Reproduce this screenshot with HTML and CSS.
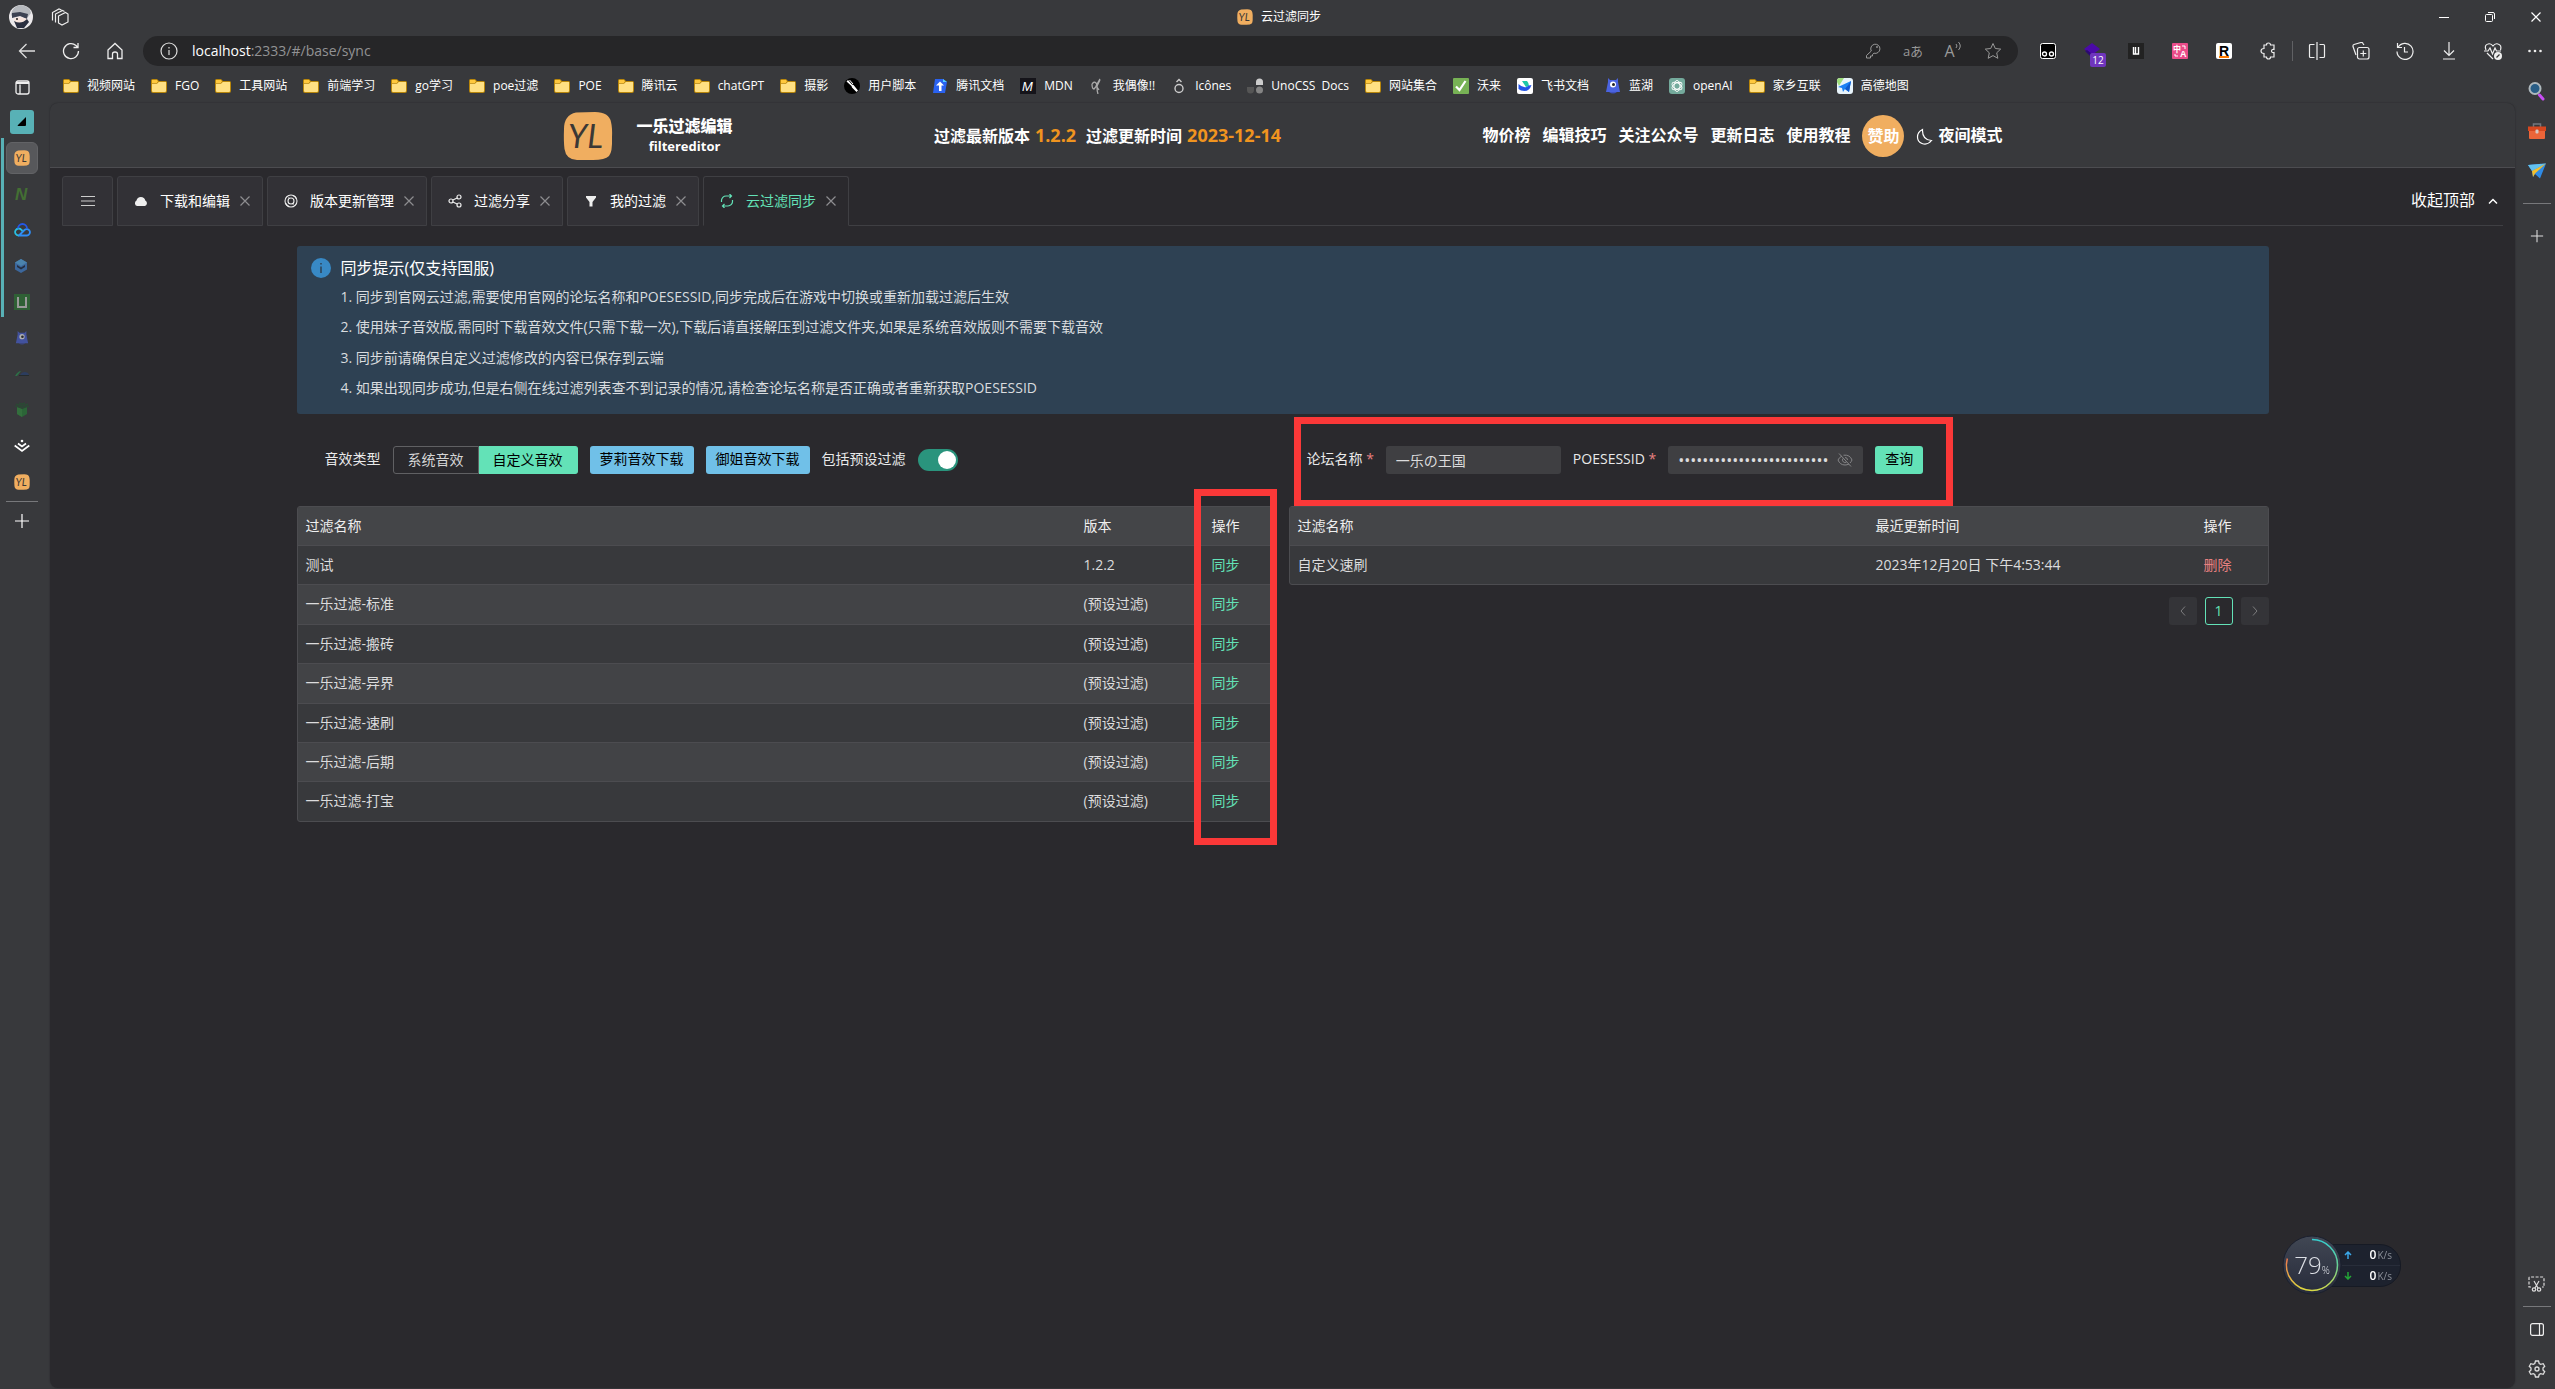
FILE: index.html
```html
<!DOCTYPE html>
<html lang="zh-CN">
<head>
<meta charset="utf-8">
<title>云过滤同步</title>
<link rel="stylesheet" href="styles.css">
</head>
<body>
<svg class="defs" aria-hidden="true">
  <symbol id="folder" viewBox="0 0 16 16"><path d="M0 2.500A1.500 1.500 0 0 1 1.500 1H6l2 2h6.500A1.500 1.500 0 0 1 16 4.500V13a2 2 0 0 1-2 2H2a2 2 0 0 1-2-2z" fill="#b8860b"/><path d="M1 2h5l1 1.300L5.800 5H1z" fill="#ffc83d"/><path d="M1 5.800h5L7.800 4H15v9a1 1 0 0 1-1 1H2a1 1 0 0 1-1-1z" fill="#ffe083"/></symbol>
  <symbol id="yl" viewBox="0 0 50 50"><path d="M13 1.500 32 1q14 0 16 10 1.500 6 1 16 .5 14-3 18-4 4-16 4H14Q3 48.500 1.500 38 .5 30 1 18 1 4 13 1.500z" fill="#f0ae60"/><text x="5" y="37" font-size="33" font-weight="400" fill="#3b3835" font-family="Lato, sans-serif" font-style="italic">YL</text></symbol>
  <symbol id="close" viewBox="0 0 12 12"><path d="M1.500 1.500l9 9M10.500 1.500l-9 9" fill="none" stroke="currentColor" stroke-width="1.200"/></symbol>
  <symbol id="plus" viewBox="0 0 16 16"><path d="M8 1v14M1 8h14" fill="none" stroke="currentColor" stroke-width="1.200"/></symbol>
  <symbol id="monster" viewBox="0 0 16 16"><path d="M3 0l2 2h6l2-2v4l1 5 1 5H1l1-5 1-5z" fill="#4a63e0"/><path d="M4 14q4 3 8 0z" fill="#3f51c0"/><circle cx="8" cy="6.500" r="3" fill="#fff"/><circle cx="8.500" cy="6.500" r="1.500" fill="#222"/></symbol>
</svg>

<header class="titlebar">
  <button class="cell" aria-label="用户"><svg width="24" height="24" viewBox="0 0 24 24"><circle cx="12" cy="12" r="12" fill="#eceaec"/><path d="M2 10Q3 1 12 0q9 1 10 8l-3 4-10-2-5 2z" fill="#b5b8bd"/><path d="M3 8l8-1 8 2-1 5-7-3-8 2z" fill="#3c4252"/><path d="M5 13l6-1 7 2-1 5-6 2-5-3z" fill="#f7e5de"/><path d="M5 16q7 4 13-2l2 3-5 6H8z" fill="#2b3040"/><circle cx="8" cy="14" r="1" fill="#222"/></svg></button>
  <button class="cell" aria-label="工作区"><svg width="18" height="18" viewBox="0 0 18 18" fill="none" stroke="#eee" stroke-width="1.200"><path d="M7.500 8l7-3.500 2.500 1.500v8l-6 3-3.500-2zM4.500 14.500V6l7-3.500 2 1M1.500 12.500v-8l6.500-3.500 2.500 1"/></svg></button>
  <div class="window-title"><svg width="16" height="16"><use href="#yl"/></svg><span>云过滤同步</span></div>
  <div class="window-controls">
    <button aria-label="最小化"><svg width="12" height="12" viewBox="0 0 12 12"><path d="M1 6.500h10" stroke="#fff"/></svg></button>
    <button aria-label="还原"><svg width="12" height="12" viewBox="0 0 12 12" fill="none" stroke="#fff"><rect x="1.500" y="3.500" width="7" height="7" rx="1"/><path d="M4 1.500h5q1.500 0 1.500 1.500v5"/></svg></button>
    <button aria-label="关闭"><svg width="12" height="12" color="#fff"><use href="#close"/></svg></button>
  </div>
</header>

<div class="toolbar">
  <button class="cell" aria-label="返回"><svg width="18" height="18" viewBox="0 0 18 18" fill="none" stroke="#ddd" stroke-width="1.300"><path d="M17 9H1.500M8.500 2l-7 7 7 7"/></svg></button>
  <button class="cell" aria-label="刷新"><svg width="18" height="18" viewBox="0 0 18 18" fill="none" stroke="#eee" stroke-width="1.300"><path d="M16.500 9A7.500 7.500 0 1 1 14 3.500L16 5.500M16 1v4.500h-4.500"/></svg></button>
  <button class="cell" aria-label="主页"><svg width="18" height="18" viewBox="0 0 18 18" fill="none" stroke="#eee" stroke-width="1.300"><path d="M2 8l7-6.500L16 8v8.500h-4.500V12q0-2-2.500-2t-2.500 2v4.500H2z"/></svg></button>
  <form class="address">
    <svg width="18" height="18" viewBox="0 0 18 18" fill="none" stroke="#ddd" stroke-width="1.200"><circle cx="9" cy="9" r="8"/><path d="M9 8v5M9 5v1.500"/></svg>
    <a class="url" href="#/base/sync">localhost<span>:2333/#/base/sync</span></a>
    <div class="address-icons">
      <button type="button" aria-label="密码"><svg width="16" height="16" viewBox="0 0 16 16" fill="none" stroke="#999"><path d="M6.300 8A4.600 4.600 0 1 1 9 10.200L7.500 11.500V13H5.500v2H1.500v-2.500z"/><circle cx="12" cy="4" r=".6"/></svg></button>
      <button type="button" class="translate" aria-label="翻译">aあ</button>
      <button type="button" class="read" aria-label="朗读">A<svg width="7" height="12" viewBox="0 0 7 12" fill="none" stroke="#999"><path d="M1 3q2 2 0 4M3.500 1q3.500 4 0 8"/></svg></button>
      <button type="button" aria-label="收藏"><svg width="18" height="18" viewBox="0 0 18 18" fill="none" stroke="#999"><path d="M9 1.500l2.300 5 5.400.6-4 3.700 1.100 5.500L9 13.600l-4.800 2.700 1.100-5.500-4-3.700 5.400-.6z"/></svg></button>
    </div>
  </form>
  <nav class="extensions" aria-label="扩展">
    <button class="cell" aria-label="脚本管理"><svg width="16" height="16" viewBox="0 0 16 16"><rect x=".5" y=".5" width="15" height="15" rx="2" fill="#000" stroke="#fff"/><g fill="none" stroke="#fff" stroke-width="1.300"><circle cx="4.500" cy="11" r="2"/><circle cx="11.500" cy="11" r="2"/></g></svg></button>
    <button class="cell badge-host" aria-label="扩展 12"><svg width="16" height="16" viewBox="0 0 16 16"><path d="M8 0l8 6-8 6-8-6z" fill="#4b0aa8"/><path d="M1 8l7 7V11L3 7z" fill="#2b0a70"/></svg><span class="badge">12</span></button>
    <button class="cell" aria-label="扩展 U"><svg width="16" height="16" viewBox="0 0 16 16"><path fill="#222" d="M0 0h16v16H0z"/><path d="M5.500 4v7h2V4M7.500 11h3V4" fill="none" stroke="#fff" stroke-width="1.400"/></svg></button>
    <button class="cell" aria-label="翻译扩展"><svg width="16" height="16" viewBox="0 0 16 16"><rect width="16" height="16" rx="1" fill="#ea4c89"/><text x="1" y="9" font-size="8" font-weight="700" fill="#fff" font-family="Noto Sans CJK SC, sans-serif">中</text><text x="8" y="14" font-size="9" font-weight="700" fill="#fff" font-family="Liberation Sans, sans-serif">A</text><path d="M10 3h3v3M3 11v2h3" fill="none" stroke="#fff"/></svg></button>
    <button class="cell" aria-label="扩展 R"><svg width="16" height="16" viewBox="0 0 16 16"><rect width="16" height="16" rx="2" fill="#fff"/><text x="3" y="13" font-size="14" font-weight="700" fill="#000" font-family="Liberation Sans, sans-serif">R</text><path d="M3 13h10v2H3z" fill="#ff7a00"/></svg></button>
    <button class="cell" aria-label="扩展管理"><svg width="18" height="18" viewBox="0 0 18 18" fill="none" stroke="#eee" stroke-width="1.200"><path d="M5 3h2.500Q7.500 1 9.500 1t2 2H15v4.500q-2.500-.3-2.500 1.500t2.500 1.500V15h-3.500q0 2-2 2t-2-2H5v-3.500Q2 11.500 2 9t3-2.500z"/></svg></button>
    <i class="sep"></i>
    <button class="cell" aria-label="拆分屏幕"><svg width="18" height="18" viewBox="0 0 18 18" fill="none" stroke="#eee" stroke-width="1.200"><path d="M9 0v18M6.500 2.500h-4q-1 0-1 1v11q0 1 1 1h4M11.500 2.500h4q1 0 1 1v11q0 1-1 1h-4"/></svg></button>
    <button class="cell" aria-label="集锦"><svg width="18" height="18" viewBox="0 0 18 18" fill="none" stroke="#eee" stroke-width="1.200"><rect x="5.500" y="5.500" width="11.500" height="11.500" rx="2"/><path d="M11.300 8.500v6M8.300 11.500h6M4 13L1 4.500Q.7 3 2 2.500l7-2q1.500-.3 2 1L12 3"/></svg></button>
    <button class="cell" aria-label="历史记录"><svg width="18" height="18" viewBox="0 0 18 18" fill="none" stroke="#eee" stroke-width="1.200"><path d="M1.500 1v4.500H6M2 5.500a8 8 0 1 1-1 4M8.500 5v5H12"/></svg></button>
    <button class="cell" aria-label="下载"><svg width="18" height="18" viewBox="0 0 18 18" fill="none" stroke="#eee" stroke-width="1.200"><path d="M9 0v13M4 8.500l5 5 5-5M3 17h12"/></svg></button>
    <button class="cell" aria-label="性能"><svg width="18" height="18" viewBox="0 0 18 18" fill="none" stroke="#eee" stroke-width="1.200"><path d="M2 8Q0 3 4 2q3-1 5 2 2-3 5-2 4 1 2.500 6M0 9h4l2-3 2.500 6L11 6l1.500 3H17M3 11l6 6"/><circle cx="14" cy="14" r="4" fill="#eee" stroke="none"/><path d="M12.500 15.500l3-3" stroke="#333"/></svg></button>
    <button class="cell" aria-label="更多"><svg width="16" height="16" viewBox="0 0 16 16" fill="#eee"><circle cx="2.500" cy="8" r="1.300"/><circle cx="8" cy="8" r="1.300"/><circle cx="13.500" cy="8" r="1.300"/></svg></button>
  </nav>
</div>

<div class="workspace">
  <aside class="rail rail-left" aria-label="标签页">
    <button class="rail-item short" aria-label="标签栏"><svg width="15" height="15" viewBox="0 0 15 15" fill="none" stroke="#eee" stroke-width="1.300"><rect x="1" y="1" width="13" height="13" rx="2"/><path d="M5 4.500v9.500"/><path d="M1 2h13v2H1z" fill="#eee" stroke="none"/></svg></button>
    <button class="rail-item" aria-label="分组"><span class="group"><svg width="10" height="10" viewBox="0 0 10 10"><path d="M9 0v8q0 1-1 1H1Q0 9 1 8z" fill="#000"/></svg></span></button>
    <button class="rail-item" aria-label="云过滤同步"><span class="active-tab"><svg width="16" height="16"><use href="#yl"/></svg></span></button>
    <button class="rail-item" aria-label="标签 N"><svg width="16" height="18" viewBox="0 0 16 18"><text x="1" y="15" font-size="17" font-weight="700" font-style="italic" fill="#436f33" font-family="Liberation Sans, sans-serif">N</text></svg></button>
    <button class="rail-item" aria-label="腾讯云"><svg width="17" height="14" viewBox="0 0 17 14" fill="none" stroke-width="1.800"><path d="M4 12.500h9a3.200 3.200 0 1 0-2.500-5.500L5 12.500" stroke="#2f8cf5"/><path d="M4.500 12.500a3.500 3.500 0 1 1 3-5.500l1 1" stroke="#29bfe0"/><path d="M4 5.500a4.500 4.500 0 0 1 9 0" stroke="#2458e8"/></svg></button>
    <button class="rail-item" aria-label="标签"><svg width="16" height="16" viewBox="0 0 16 16"><path d="M7 1l6 3.500v7L7 15l-6-3.500v-7z" fill="#3c679c"/><path d="M7 1l6 3.500L7 8 1 4.500z" fill="#4b83ad"/><path d="M3 7l4 2.500L11 7v2l-4 2.500L3 9z" fill="#252e40"/></svg></button>
    <button class="rail-item" aria-label="标签 U"><svg width="16" height="16" viewBox="0 0 16 16"><path fill="#2f6035" d="M0 0h16v16H0z"/><path d="M4 3v10h8V3" fill="none" stroke="#999" stroke-width="2"/></svg></button>
    <button class="rail-item faded" aria-label="蓝湖"><svg width="14" height="14"><use href="#monster"/></svg></button>
    <button class="rail-item" aria-label="标签"><svg width="16" height="16" viewBox="0 0 16 16"><path d="M1 10q3-5 6-5L3 10z" fill="#2d7047"/><path d="M6 9q3-5 8-2l1 2z" fill="#2c3d5e"/><path d="M5 9h10v1H5z" fill="#242b2d"/></svg></button>
    <button class="rail-item" aria-label="标签"><svg width="16" height="16" viewBox="0 0 16 16"><path d="M3 5l5 2 5-2v7l-5 3-5-3z" fill="#2b6537"/><path d="M8 7v8l-5-3V5z" fill="#336f3d"/><path d="M2 2l6 2 6-2M1 4l7 2 7-2M5 1l3 1 3-1" stroke="#284e33" fill="none" stroke-width="1.200"/></svg></button>
    <button class="rail-item" aria-label="掘金"><svg width="16" height="16" viewBox="0 0 16 16" fill="none" stroke="#fff" stroke-width="1.700"><path d="M.7 7.500L8 13l7.300-5.500M4 5.500l4 3 4-3"/><circle cx="8" cy="3" r="1.300" fill="#fff" stroke="none"/></svg></button>
    <button class="rail-item" aria-label="过滤编辑"><svg width="16" height="16"><use href="#yl"/></svg></button>
    <hr>
    <button class="rail-item" aria-label="新建标签页"><svg width="16" height="16" color="#fff"><use href="#plus"/></svg></button>
  </aside>

  <div class="center">
    <nav class="bookmarks" aria-label="收藏夹栏">
      <a href="#"><svg><use href="#folder"/></svg>视频网站</a>
      <a href="#"><svg><use href="#folder"/></svg>FGO</a>
      <a href="#"><svg><use href="#folder"/></svg>工具网站</a>
      <a href="#"><svg><use href="#folder"/></svg>前端学习</a>
      <a href="#"><svg><use href="#folder"/></svg>go学习</a>
      <a href="#"><svg><use href="#folder"/></svg>poe过滤</a>
      <a href="#"><svg><use href="#folder"/></svg>POE</a>
      <a href="#"><svg><use href="#folder"/></svg>腾讯云</a>
      <a href="#"><svg><use href="#folder"/></svg>chatGPT</a>
      <a href="#"><svg><use href="#folder"/></svg>摄影</a>
      <a href="#"><svg viewBox="0 0 16 16"><circle cx="8" cy="8" r="8" fill="#000"/><path d="M2.500 3.500L4 2l4 4.500 1.500.5L14 12.500 12.500 14 8 9.500 7.500 8z" fill="#fff"/><path d="M5.500 2l3.500 4" stroke="#fff"/></svg>用户脚本</a>
      <a href="#"><svg viewBox="0 0 16 16"><path d="M3 1h8l4 3-2 11H1z" fill="#2a62f0"/><path d="M11 1l4 3h-4z" fill="#56d0ff"/><path d="M8 3.500l4 4H9.500V13H7V7.500H4z" fill="#fff"/></svg>腾讯文档</a>
      <a href="#"><svg viewBox="0 0 16 16"><path fill="#15141a" d="M0 0h16v16H0z"/><text x="2" y="13" font-size="13" font-style="italic" fill="#fff" font-family="Liberation Sans, sans-serif">M</text></svg>MDN</a>
      <a href="#"><svg viewBox="0 0 16 16" fill="none" stroke="#aaa"><path d="M11 1Q8 5 8 9t1 7M3 6q2-3 4-1T5 11q-2 0-2-5M8 8l3-6M8 9l2 3" stroke-width="1.300"/></svg>我偶像!!</a>
      <a href="#"><svg viewBox="0 0 16 16" fill="none" stroke="#ccc" stroke-width="1.400"><circle cx="8" cy="10.500" r="4"/><path d="M5.500 4L8 1.500 10.500 4"/></svg>Icônes</a>
      <a href="#"><svg viewBox="0 0 16 16"><path d="M9 7V4a3.500 3.500 0 0 1 7 0v3z" fill="#ccc"/><circle cx="12.500" cy="12" r="3.500" fill="#858585"/><path d="M0 9h7v3a3.500 3.500 0 0 1-7 0z" fill="#555"/></svg>UnoCSS&nbsp; Docs</a>
      <a href="#"><svg><use href="#folder"/></svg>网站集合</a>
      <a href="#"><svg viewBox="0 0 16 16"><rect width="16" height="16" rx="1" fill="#77b255"/><path d="M3 8.500L6.500 12 12.500 3" fill="none" stroke="#fff" stroke-width="2.200"/></svg>沃来</a>
      <a href="#"><svg viewBox="0 0 16 16"><rect width="16" height="16" rx="2" fill="#fff"/><path d="M5 3h5q2 2 2 5L9 9z" fill="#1dc8a8"/><path d="M1.500 6q4 4 8 3 2-2 5-2-2 6-7 6-4 0-6-2z" fill="#2455e8"/></svg>飞书文档</a>
      <a href="#"><svg><use href="#monster"/></svg>蓝湖</a>
      <a href="#"><svg viewBox="0 0 16 16"><rect width="16" height="16" rx="3" fill="#74aa9c"/><g fill="none" stroke="#fff" stroke-width=".9"><ellipse cx="8" cy="8" rx="3" ry="5.500"/><ellipse cx="8" cy="8" rx="3" ry="5.500" transform="rotate(60 8 8)"/><ellipse cx="8" cy="8" rx="3" ry="5.500" transform="rotate(120 8 8)"/></g></svg>openAI</a>
      <a href="#"><svg><use href="#folder"/></svg>家乡互联</a>
      <a href="#"><svg viewBox="0 0 16 16"><rect width="16" height="16" rx="3" fill="#e8f4fb"/><path d="M0 4V3q0-3 3-3h4L2 8z" fill="#9fdd7c"/><path d="M14 3L1 9l4 1 1 4 2-3 4 3z" fill="#1b80f5"/><path d="M8 11l6-8-2 11z" fill="#0d59cc"/></svg>高德地图</a>
    </nav>

    <main class="page">
      <header class="site-header">
        <div class="site-header-inner">
          <div class="brand">
            <svg width="50" height="50"><use href="#yl"/></svg>
            <div class="brand-name"><strong>一乐过滤编辑</strong><small>filtereditor</small></div>
          </div>
          <p class="release">过滤最新版本 <em>1.2.2</em><span>过滤更新时间 <em>2023-12-14</em></span></p>
          <nav class="site-nav">
            <a href="#">物价榜</a><a href="#">编辑技巧</a><a href="#">关注公众号</a><a href="#">更新日志</a><a href="#">使用教程</a>
            <a href="#" class="sponsor">赞助</a>
            <button class="mode"><svg width="17" height="17" viewBox="0 0 17 17" fill="none" stroke="#fff" stroke-width="1.200"><path d="M6.500 1.500Q1.500 4 1.500 9t4.500 6.500q5.500 2 9.500-3Q6 12 6.500 1.500z"/></svg>夜间模式</button>
          </nav>
        </div>
      </header>

      <div class="tabs">
        <button class="tab menu" aria-label="菜单"><svg width="14" height="14" viewBox="0 0 14 14" stroke="#ccc" stroke-width="1.200"><path d="M0 2.500h14M0 7h14M0 11.500h14"/></svg></button>
        <div class="tab"><svg width="14" height="14" viewBox="0 0 14 14" fill="#eee"><path d="M3 12a3 3 0 0 1-.5-5.500A4.500 4.500 0 0 1 11.300 6.500 3 3 0 0 1 11 12z"/></svg><a href="#">下载和编辑</a><button aria-label="关闭"><svg width="12" height="12"><use href="#close"/></svg></button></div>
        <div class="tab"><svg width="14" height="14" viewBox="0 0 14 14" fill="none" stroke="#eee" stroke-width="1.100"><circle cx="7" cy="7" r="6"/><circle cx="7" cy="7" r="3"/><path d="M2 9.500q1 2.500 3 3M9 1.500q2.500 1 3 3M4.500 3.500l1 1.200M9.500 10.500l-1-1.200"/></svg><a href="#">版本更新管理</a><button aria-label="关闭"><svg width="12" height="12"><use href="#close"/></svg></button></div>
        <div class="tab"><svg width="14" height="14" viewBox="0 0 14 14" fill="none" stroke="#eee" stroke-width="1.200"><circle cx="3" cy="7" r="2"/><circle cx="11" cy="3" r="2"/><circle cx="11" cy="11" r="2"/><path d="M4.800 6L9.200 4M4.800 8l4.400 2"/></svg><a href="#">过滤分享</a><button aria-label="关闭"><svg width="12" height="12"><use href="#close"/></svg></button></div>
        <div class="tab"><svg width="14" height="14" viewBox="0 0 14 14" fill="#eee"><path d="M2 2h10v1.500L8.500 8v4.500h-3V8L2 3.500z"/></svg><a href="#">我的过滤</a><button aria-label="关闭"><svg width="12" height="12"><use href="#close"/></svg></button></div>
        <div class="tab current"><svg width="14" height="14" viewBox="0 0 14 14" fill="none" stroke="#63e2b7" stroke-width="1.200"><path d="M1.500 8V6.500A4.500 4.500 0 0 1 6 2h5.500M9.500 0l2 2-2 2M12.500 6v1.500A4.500 4.500 0 0 1 8 12H2.500M4.500 10l-2 2 2 2"/></svg><a href="#">云过滤同步</a><button aria-label="关闭"><svg width="12" height="12"><use href="#close"/></svg></button></div>
        <div class="tabs-rest"><button class="collapse">收起顶部<svg width="10" height="8" viewBox="0 0 10 8"><path d="M1 6.500l4-4 4 4" fill="none" stroke="#fff" stroke-width="1.500"/></svg></button></div>
      </div>

      <div class="content">
        <section class="alert" role="note">
          <svg class="alert-icon" width="20" height="20" viewBox="0 0 20 20"><circle cx="10" cy="10" r="10" fill="#3889c5"/><path d="M10 8.500V15M10 5v1.600" stroke="#2e4153" stroke-width="1.500"/></svg>
          <div>
            <h2>同步提示(仅支持国服)</h2>
            <ul>
              <li>1. 同步到官网云过滤,需要使用官网的论坛名称和POESESSID,同步完成后在游戏中切换或重新加载过滤后生效</li>
              <li>2. 使用妹子音效版,需同时下载音效文件(只需下载一次),下载后请直接解压到过滤文件夹,如果是系统音效版则不需要下载音效</li>
              <li>3. 同步前请确保自定义过滤修改的内容已保存到云端</li>
              <li>4. 如果出现同步成功,但是右侧在线过滤列表查不到记录的情况,请检查论坛名称是否正确或者重新获取POESESSID</li>
            </ul>
          </div>
        </section>

        <div class="columns">
          <section class="column">
            <form class="controls controls-left">
              <span class="field-label" id="sound">音效类型</span>
              <div class="radio-group" role="radiogroup" aria-labelledby="sound">
                <label><input type="radio" name="sound"><span>系统音效</span></label>
                <label><input type="radio" name="sound" checked><span>自定义音效</span></label>
              </div>
              <button type="button" class="btn info">萝莉音效下载</button>
              <button type="button" class="btn info">御姐音效下载</button>
              <label class="switch-field"><span>包括预设过滤</span><input type="checkbox" class="switch" checked></label>
            </form>
            <div class="table-wrap">
              <table class="filters">
                <thead><tr><th>过滤名称</th><th class="c-version">版本</th><th class="c-op">操作</th></tr></thead>
                <tbody>
                  <tr><td>测试</td><td>1.2.2</td><td><a href="#">同步</a></td></tr>
                  <tr><td>一乐过滤-标准</td><td>(预设过滤)</td><td><a href="#">同步</a></td></tr>
                  <tr><td>一乐过滤-搬砖</td><td>(预设过滤)</td><td><a href="#">同步</a></td></tr>
                  <tr><td>一乐过滤-异界</td><td>(预设过滤)</td><td><a href="#">同步</a></td></tr>
                  <tr><td>一乐过滤-速刷</td><td>(预设过滤)</td><td><a href="#">同步</a></td></tr>
                  <tr><td>一乐过滤-后期</td><td>(预设过滤)</td><td><a href="#">同步</a></td></tr>
                  <tr><td>一乐过滤-打宝</td><td>(预设过滤)</td><td><a href="#">同步</a></td></tr>
                </tbody>
              </table>
              <div class="mark mark-column"></div>
            </div>
          </section>

          <section class="column">
            <form class="controls controls-right">
              <label class="field-label" for="forum">论坛名称 <b>*</b></label>
              <input id="forum" class="input forum" type="text" value="一乐の王国">
              <label class="field-label" for="sess">POESESSID <b>*</b></label>
              <div class="input secret"><input id="sess" type="password" value="0123456789abcdef012345678"><button type="button" aria-label="显示"><svg width="16" height="16" viewBox="0 0 16 16" fill="none" stroke="#858587"><path d="M2 1.500l12 13M5 4Q2 5.500 1 8q2 5 7 5 2 0 4-1M6.500 3.200Q13 2.500 15 8q-.6 1.700-2 3M6 6.500a2.500 2.500 0 0 0 3.500 3.500M8 5.500a2.500 2.500 0 0 1 2.500 2.500"/></svg></button></div>
              <button type="button" class="btn primary">查询</button>
              <div class="mark mark-form"></div>
            </form>
            <div class="table-wrap">
              <table class="filters">
                <thead><tr><th>过滤名称</th><th class="c-time">最近更新时间</th><th class="c-delete">操作</th></tr></thead>
                <tbody><tr><td>自定义速刷</td><td>2023年12月20日 下午4:53:44</td><td><a href="#" class="danger">删除</a></td></tr></tbody>
              </table>
            </div>
            <nav class="pager" aria-label="分页">
              <button aria-label="上一页" disabled><svg width="8" height="12" viewBox="0 0 8 12"><path d="M6 1.500L2 6l4 4.500" fill="none" stroke="#7c7c7e"/></svg></button>
              <button class="on">1</button>
              <button aria-label="下一页" disabled><svg width="8" height="12" viewBox="0 0 8 12"><path d="M2 1.500L6 6l-4 4.500" fill="none" stroke="#7c7c7e"/></svg></button>
            </nav>
          </section>
        </div>
      </div>
    </main>
  </div>

  <aside class="rail rail-right" aria-label="侧栏">
    <button class="rail-item" aria-label="搜索"><svg width="17" height="20" viewBox="0 0 17 20"><path d="M11.500 14l3.500 4" stroke="#c84df5" stroke-width="3" stroke-linecap="round"/><circle cx="7" cy="7.500" r="5.500" fill="#285d86" stroke="#aeb8bd" stroke-width="2"/></svg></button>
    <button class="rail-item" aria-label="工具"><svg width="18" height="18" viewBox="0 0 18 18"><path d="M5.500 5V2h7v3" fill="none" stroke="#73777d" stroke-width="1.500"/><path d="M0 4.500h18V9H0z" fill="#d6471f"/><path d="M1 9h16v7q0 1-1 1H2q-1 0-1-1z" fill="#ec6539"/><rect x="7.500" y="7.500" width="3" height="4" rx="1" fill="#d7c8c2"/></svg></button>
    <button class="rail-item" aria-label="投放"><svg width="18" height="16" viewBox="0 0 18 16"><path d="M0 2L18 .500 12 15.500 7 11 5 14 4 8z" fill="#2f8be6"/><path d="M0 2L18 .500 4 8z" fill="#62c1ef"/><path d="M4 8L18 .500 7 10.500 5 14z" fill="#f4bf2c"/></svg></button>
    <hr>
    <button class="rail-item" aria-label="添加"><svg width="14" height="14" color="#ddd"><use href="#plus"/></svg></button>
    <div class="spacer"></div>
    <button class="rail-item" aria-label="截图"><svg width="17" height="16" viewBox="0 0 17 16" fill="none" stroke="#ddd" stroke-width="1.200"><path d="M3 11H1V2q0-1 1-1h13q1 0 1 1v9h-2" stroke-dasharray="3 1.500"/><path d="M6 5l4 7M11 5l-4 7"/><circle cx="6" cy="13.500" r="1.700"/><circle cx="11" cy="13.500" r="1.700"/></svg></button>
    <hr>
    <button class="rail-item" aria-label="面板"><svg width="14" height="13" viewBox="0 0 14 13" fill="none" stroke="#eee" stroke-width="1.200"><rect x=".6" y=".6" width="12.800" height="11.800" rx="2"/><path d="M9.500 1v11"/></svg></button>
    <button class="rail-item" aria-label="设置"><svg width="18" height="18" viewBox="0 0 18 18" fill="none" stroke="#ddd" stroke-width="1.300"><path d="M7.500 1h3l.7 2.500 1.500.9 2.500-.7 1.500 2.600L15 8.100v1.800l1.700 1.800-1.500 2.600-2.500-.7-1.500.9-.7 2.500h-3l-.7-2.500-1.500-.9-2.500.7-1.500-2.600L3 9.900V8.100L1.300 6.300l1.500-2.600 2.500.7 1.500-.9z"/><circle cx="9" cy="9" r="2"/></svg></button>
  </aside>
</div>

<div class="monitor" role="status">
  <div class="gauge">
    <svg width="60" height="60" viewBox="0 0 60 60"><defs><linearGradient id="face" x1="0" y1="0" x2="0" y2="1"><stop stop-color="#414754"/><stop offset="1" stop-color="#272b3a"/></linearGradient><linearGradient id="arc-right" x1="0" y1="0" x2="0" y2="1"><stop stop-color="#35cfd0"/><stop offset=".5" stop-color="#67d196"/><stop offset="1" stop-color="#d3d94a"/></linearGradient><linearGradient id="arc-left" x1="0" y1="0" x2="0" y2="1"><stop stop-color="#f0764c"/><stop offset="1" stop-color="#ddd93f"/></linearGradient></defs><circle cx="30" cy="30" r="29" fill="url(#face)" stroke="#1b202e"/><path d="M30 4.500a25.500 25.500 0 0 1 0 51" fill="none" stroke="url(#arc-right)" stroke-width="1.500"/><path d="M30 55.500A25.500 25.500 0 0 1 5.300 23.500" fill="none" stroke="url(#arc-left)" stroke-width="1.500"/></svg>
    <span class="percent">79<small>%</small></span>
  </div>
  <div class="speeds">
    <div><svg width="8" height="8" viewBox="0 0 8 8"><path d="M4 8V1M1 4l3-3 3 3" fill="none" stroke="#3aa7e8" stroke-width="1.500"/></svg><span>0<small>K/s</small></span></div>
    <div><svg width="8" height="8" viewBox="0 0 8 8"><path d="M4 0v7M1 4l3 3 3-3" fill="none" stroke="#23a637" stroke-width="1.500"/></svg><span>0<small>K/s</small></span></div>
  </div>
</div>
</body>
</html>
```
FILE: styles.css
```css
* { box-sizing: border-box; }

body {
  margin: 0;
  min-height: 100vh;
  display: flex;
  flex-direction: column;
  background: #38393c;
  color: #fff;
  font: 14px/1.6 "Open Sans", "Noto Sans CJK SC", sans-serif;
}

button, input { font: inherit; color: inherit; }
button { border: 0; padding: 0; background: none; display: flex; align-items: center; justify-content: center; }
a { color: inherit; text-decoration: none; }
svg { display: block; flex: none; }
.defs { position: absolute; width: 0; height: 0; }

/* Browser frame */
.titlebar { display: flex; height: 34px; padding-left: 4px; align-items: center; }
.titlebar .cell:first-child { width: 34px; }
.cell { flex: none; width: 44px; height: 32px; }
.window-title { flex: 1; display: flex; gap: 8px; align-items: center; justify-content: center; font-size: 12px; padding-left: 55px; }
.window-controls { display: flex; }
.window-controls button { width: 46px; height: 32px; }
.window-controls button:last-child { width: 38px; margin-left: 4px; }

.toolbar { display: flex; align-items: center; height: 36px; padding: 0 0 2px 5px; }
.address { flex: 1; display: flex; align-items: center; height: 30px; margin-left: 6px; padding: 0 5px 0 17px; border-radius: 15px; background: #262628; }
.url { margin-left: 14px; font-size: 14px; color: #fff; }
.url span { color: #929294; }
.address-icons { margin-left: auto; display: flex; }
.address-icons button { width: 40px; color: #999; font-size: 13px; line-height: 20px; }
.address-icons .read { font-size: 16px; align-items: flex-start; }
.extensions { display: flex; align-items: center; padding-left: 8px; }
.extensions .cell:last-child { width: 40px; }
.sep { width: 1px; height: 20px; margin: 0 2px; background: #606164; }
.badge-host { position: relative; }
.badge { position: absolute; left: 20px; top: 18px; width: 16px; height: 14px; border-radius: 2px; background: #6f35bd; font-size: 10px; line-height: 14px; }

.workspace { flex: 1; display: flex; }
.rail { display: flex; flex-direction: column; align-items: center; }
.rail-left { position: relative; width: 50px; padding: 0 6px 0 0; }
.rail-left::before { content: ""; position: absolute; left: 1px; top: 68px; width: 3px; height: 179px; background: #58b1b6; }
.rail-item { width: 40px; height: 36px; flex: none; }
.rail-item.short { height: 34px; }
.rail-item.faded { opacity: .6; }
.rail hr { border: 0; height: 1px; background: #77787b; margin: 1px 0; width: 32px; flex: none; }
.group { display: grid; place-items: center; width: 24px; height: 24px; border-radius: 3px; background: #58b1b6; }
.active-tab { display: grid; place-items: center; width: 32px; height: 32px; border-radius: 6px; background: #57585b; border: 1px solid #626366; }
.rail-right { width: 40px; padding: 1px 0 0 3px; }
.rail-right .rail-item { width: 37px; height: 40px; }
.rail-right hr { width: 28px; margin: 12px 0; }
.spacer { flex: 1; }
.rail-right .spacer ~ hr { margin: 2px 0; }

.center { flex: 1; min-width: 0; display: flex; flex-direction: column; }
.bookmarks { display: flex; gap: 16px; height: 33px; padding: 0 0 1px 13px; align-items: center; font-size: 12px; white-space: nowrap; }
.bookmarks a { display: flex; gap: 8px; align-items: center; }
.bookmarks svg { width: 16px; height: 16px; }

/* Site */
.page { flex: 1; margin-bottom: 1px; border-radius: 8px; overflow: hidden; background: #2a292d; box-shadow: 0 0 1px 1px #333437; }
.site-header { background: #38393c; border-bottom: 1px solid #4c4c50; height: 65px; padding-top: 2px; display: flex; justify-content: center; font-size: 16px; font-weight: 700; }
.site-header-inner { width: 100%; max-width: 1440px; display: flex; align-items: center; justify-content: space-between; }
.brand { display: flex; align-items: center; gap: 24px; }
.brand-name { display: flex; flex-direction: column; align-items: center; line-height: 20px; }
.brand-name small { font-size: 13px; }
.release { margin: 0; display: flex; align-items: baseline; gap: 5px; white-space: nowrap; }
.release em { font-style: normal; font-size: 18px; line-height: 24px; color: #f0941f; }
.release span { margin-left: 5px; display: flex; align-items: baseline; gap: 5px; }
.site-nav { display: flex; gap: 12px; align-items: center; }
.sponsor { width: 42px; height: 42px; border-radius: 50%; background: #f0ae60; line-height: 42px; white-space: nowrap; display: flex; justify-content: center; }
.mode { gap: 5px; }

.tabs { display: flex; padding: 8px 12px 0; height: 58px; align-items: stretch; }
.tab { display: flex; align-items: center; padding: 0 11px 0 16px; border: 1px solid #3f3f43; border-radius: 3px 3px 0 0; background: #323136; margin-right: 4px; white-space: nowrap; }
.tab > a { margin: 0 9px 0 12px; }
.tab > button { color: #8d8d90; }
.tab.menu { width: 51px; padding: 0; justify-content: center; }
.tab.current { background: #2a292d; border-bottom-color: #2a292d; color: #63e2b7; margin-right: 0; }
.tabs-rest { flex: 1; border-bottom: 1px solid #3f3f43; display: flex; justify-content: flex-end; padding-right: 5px; }
.collapse { gap: 13px; font-size: 16px; }

.content { width: 80%; margin: 20px auto 0; }
.alert { display: flex; gap: 10px; padding: 12px 14px 14px; border-radius: 3px; background: #2e4153; }
.alert h2 { margin: 0; font-size: 16px; font-weight: 400; line-height: 20px; }
.alert ul { list-style: none; margin: 8px 0 0; padding: 0; color: #d9dcdf; }
.alert li + li { padding-top: 8px; }

.columns { display: grid; grid-template-columns: 1fr 1fr; gap: 12px; }
.column { min-width: 0; }
.controls { position: relative; display: flex; align-items: center; gap: 12px; height: 92px; white-space: nowrap; color: #e9e9ea; }
.controls-left { padding-left: 28px; }
.controls-right { padding-left: 18px; }
.field-label b { color: #e88080; font-weight: 400; }
.radio-group { display: flex; height: 28px; color: #d5d5d6; line-height: 26px; }
.radio-group input { position: absolute; opacity: 0; margin: 0; }
.radio-group span { display: block; height: 28px; padding: 0 14px; border: 1px solid #606063; border-radius: 3px 0 0 3px; }
.radio-group label + label span { border-left: 0; border-radius: 0 3px 3px 0; }
.radio-group input:checked + span { background: #63e2b7; border-color: #63e2b7; color: #000; }
.btn { height: 28px; padding: 0 10px; border-radius: 3px; color: #000; }
.btn.info { background: #70c0e8; }
.btn.primary { background: #63e2b7; }
.switch-field { display: flex; gap: 12px; align-items: center; }
.switch { appearance: none; margin: 0; width: 40px; height: 22px; border-radius: 11px; background: #2a947d; padding: 2px; display: flex; justify-content: flex-end; }
.switch::before { content: ""; width: 18px; height: 18px; border-radius: 50%; background: #fff; }
.input { height: 28px; border: 0; border-radius: 3px; background: #3f3f42; color: #dcdcdd; padding: 0 10px; }
.forum { width: 175px; }
.secret { width: 195px; display: flex; align-items: center; }
.secret input { min-width: 0; flex: 1; border: 0; padding: 0; background: none; font-size: 16px; line-height: 20px; }

.table-wrap { position: relative; }
.filters { width: 100%; table-layout: fixed; border-spacing: 0; border: 1px solid #4c4c50; border-radius: 3px; overflow: hidden; background: #38393c; color: #dcdcdd; }
.filters th, .filters td { padding: 8px; text-align: left; font-weight: 400; border-bottom: 1px solid #4c4c50; }
.filters th { background: #444548; color: #efefef; }
.filters tr:last-child td { border-bottom: 0; }
.filters tbody tr:nth-child(even) { background: #424346; }
.filters a { color: #63e2b7; }
.filters a.danger { color: #e88080; }
.c-version { width: 128px; }
.c-op { width: 72px; }
.c-time { width: 328px; }
.c-delete { width: 72px; }

.pager { display: flex; justify-content: flex-end; gap: 8px; margin-top: 12px; }
.pager button { width: 28px; height: 28px; border-radius: 3px; background: #343438; }
.pager .on { background: none; border: 1px solid #63e2b7; color: #63e2b7; }

.mark { position: absolute; border: 7px solid #fb3838; pointer-events: none; }
.mark-column { top: -17px; bottom: -23px; right: 0; width: 83px; }
.mark-form { left: 5px; top: 3px; width: 659px; height: 90px; }

/* Desktop speed monitor floating over the window */
.monitor { position: fixed; right: 154px; bottom: 94px; display: flex; align-items: center; }
.gauge { position: relative; z-index: 1; display: grid; place-items: center; }
.gauge > * { grid-area: 1 / 1; }
.percent { font: 300 24px/1 "Open Sans", sans-serif; color: #dcdfe5; display: flex; align-items: baseline; z-index: 1; }
.percent small { font-size: 10px; }
.speeds { width: 90px; margin-left: -31px; padding-left: 30px; background: #1d222e; border: 1px solid #161a24; border-radius: 0 21px 21px 0; }
.speeds div { height: 20px; display: flex; align-items: center; justify-content: space-between; padding: 0 8px 0 2px; font: 600 12px/20px "Open Sans", sans-serif; }
.speeds div + div { border-top: 1px solid #282d3a; height: 21px; }
.speeds small { font-size: 10px; font-weight: 400; color: #8b8f98; padding-left: 1px; }
```
